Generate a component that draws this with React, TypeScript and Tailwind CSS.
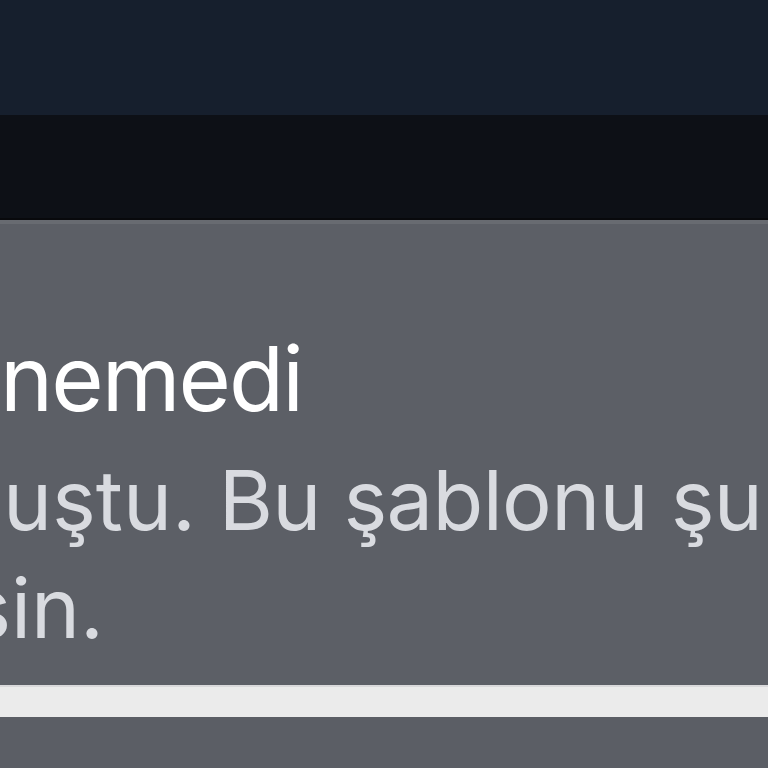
export default function App() {
  return (
    <div className="w-[768px] h-[768px] overflow-hidden flex flex-col bg-[#5c5f66]" style={{ fontFamily: 'Inter, "Noto Sans", sans-serif' }}>
      {/* Üst gezinme alanı */}
      <div className="h-[115px] shrink-0 bg-[#161f2d]" />
      <div className="h-[105px] shrink-0 bg-[#0d1016] border-b-2 border-[#08090c]" />

      {/* Hata kartı */}
      <div className="flex-1 flex flex-col border-t-4 border-[#686b71] bg-[#5c5f66]">
        <div className="pt-[110px]">
          <div className="w-[302px] flex justify-end whitespace-nowrap">
            <h1 className="shrink-0 text-[90px] leading-[90px] font-normal tracking-[-0.022em] text-white">Şablon yüklenemedi</h1>
          </div>
        </div>
        <div className="mt-[22px] text-[83px] leading-[108px] text-[#d9dbe0] whitespace-nowrap">
          <div className="flex">
            <div className="w-[196px] shrink-0 flex justify-end">
              <span className="shrink-0">Bir hata oluştu.</span>
            </div>
            <span className="shrink-0 tracking-[-0.008em]">&nbsp;Bu şablonu şu anda yükleyemiyoruz.</span>
          </div>
          <div className="w-[104px] flex justify-end">
            <span className="shrink-0">Daha sonra tekrar deneyebilirsin.</span>
          </div>
        </div>

        <div className="mt-[23px] h-[32px] shrink-0 bg-[#ebebeb] border-t-2 border-[#d9d9db]" />
        <div className="flex-1 bg-[#5b5e65]" />
      </div>
    </div>
  )
}
